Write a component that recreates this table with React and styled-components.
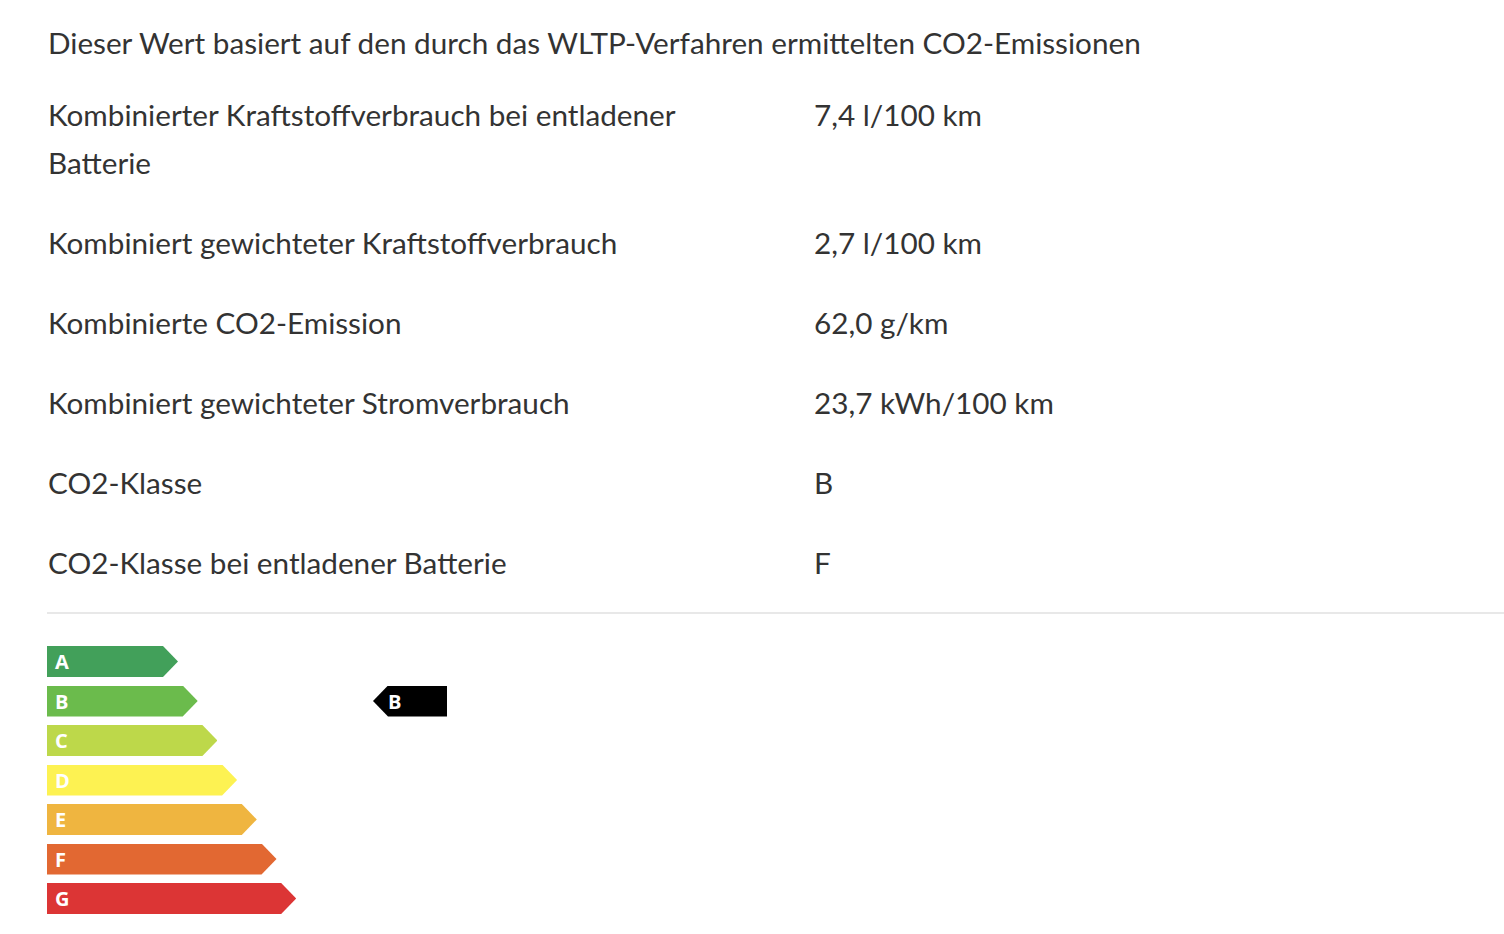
import React from 'react';
import styled, { createGlobalStyle } from 'styled-components';

const GlobalStyle = createGlobalStyle`
  html, body {
    margin: 0;
    padding: 0;
    background: #ffffff;
    overflow: hidden;
  }
  body {
    font-family: Lato, "Open Sans", sans-serif;
    color: #333333;
  }
`;

const Page = styled.div`
  padding: 19px 0 0 48px;
`;

const Intro = styled.p`
  margin: 0 0 8px;
  font-size: 29.7px;
  line-height: 48px;
`;

const Table = styled.div`
  display: grid;
  grid-template-columns: 766px 1fr;
`;

const Label = styled.div`
  padding: 16px 66px 16px 0;
  font-size: 29.7px;
  line-height: 48px;
`;

const Value = styled.div`
  padding: 16px 0;
  font-size: 29.7px;
  line-height: 48px;
`;

const Divider = styled.hr`
  margin: 9px 0 0 -1px;
  border: 0;
  border-top: 2px solid #e8e8e8;
`;

const Scale = styled.div`
  display: grid;
  grid-template-columns: 326px auto;
  grid-auto-rows: 31px;
  row-gap: 8.5px;
  padding-top: 32px;
  margin-left: -1px;
`;

const Bar = styled.div`
  grid-column: 1;
  width: ${p => p.$width}px;
  height: 31px;
  background: ${p => p.$color};
  clip-path: polygon(0 0, calc(100% - 15px) 0, 100% 50%, calc(100% - 15px) 100%, 0 100%);
  display: flex;
  align-items: center;
  padding-left: 8px;
  box-sizing: border-box;
  font-family: "Open Sans", sans-serif;
  font-weight: 700;
  font-size: 20px;
  color: #ffffff;
`;

const Marker = styled.div`
  grid-column: 2;
  grid-row: ${p => p.$row};
  width: 74px;
  height: 31px;
  background: #000000;
  clip-path: polygon(15px 0, 100% 0, 100% 100%, 15px 100%, 0 50%);
  display: flex;
  align-items: center;
  padding-left: 15px;
  box-sizing: border-box;
  font-family: "Open Sans", sans-serif;
  font-weight: 700;
  font-size: 20px;
  color: #ffffff;
`;

const rows = [
  ['Kombinierter Kraftstoffverbrauch bei entladener Batterie', '7,4 l/100 km'],
  ['Kombiniert gewichteter Kraftstoffverbrauch', '2,7 l/100 km'],
  ['Kombinierte CO2-Emission', '62,0 g/km'],
  ['Kombiniert gewichteter Stromverbrauch', '23,7 kWh/100 km'],
  ['CO2-Klasse', 'B'],
  ['CO2-Klasse bei entladener Batterie', 'F'],
];

const classes = [
  ['A', '#42a05a'],
  ['B', '#6bbb4c'],
  ['C', '#bdd84a'],
  ['D', '#fdf252'],
  ['E', '#efb540'],
  ['F', '#e26832'],
  ['G', '#dc3535'],
];

export default function App() {
  const current = 'B';
  const currentRow = classes.findIndex(c => c[0] === current) + 1;

  return (
    <>
      <GlobalStyle />
      <Page>
        <Intro>Dieser Wert basiert auf den durch das WLTP-Verfahren ermittelten CO2-Emissionen</Intro>
        <Table>
          {rows.map(([label, value]) => (
            <React.Fragment key={label}>
              <Label>{label}</Label>
              <Value>{value}</Value>
            </React.Fragment>
          ))}
        </Table>
        <Divider />
        <Scale>
          {classes.map(([name, color], i) => (
            <Bar key={name} $color={color} $width={131 + i * 19.7} style={{ gridRow: i + 1 }}>
              {name}
            </Bar>
          ))}
          <Marker $row={currentRow}>{current}</Marker>
        </Scale>
      </Page>
    </>
  );
}
